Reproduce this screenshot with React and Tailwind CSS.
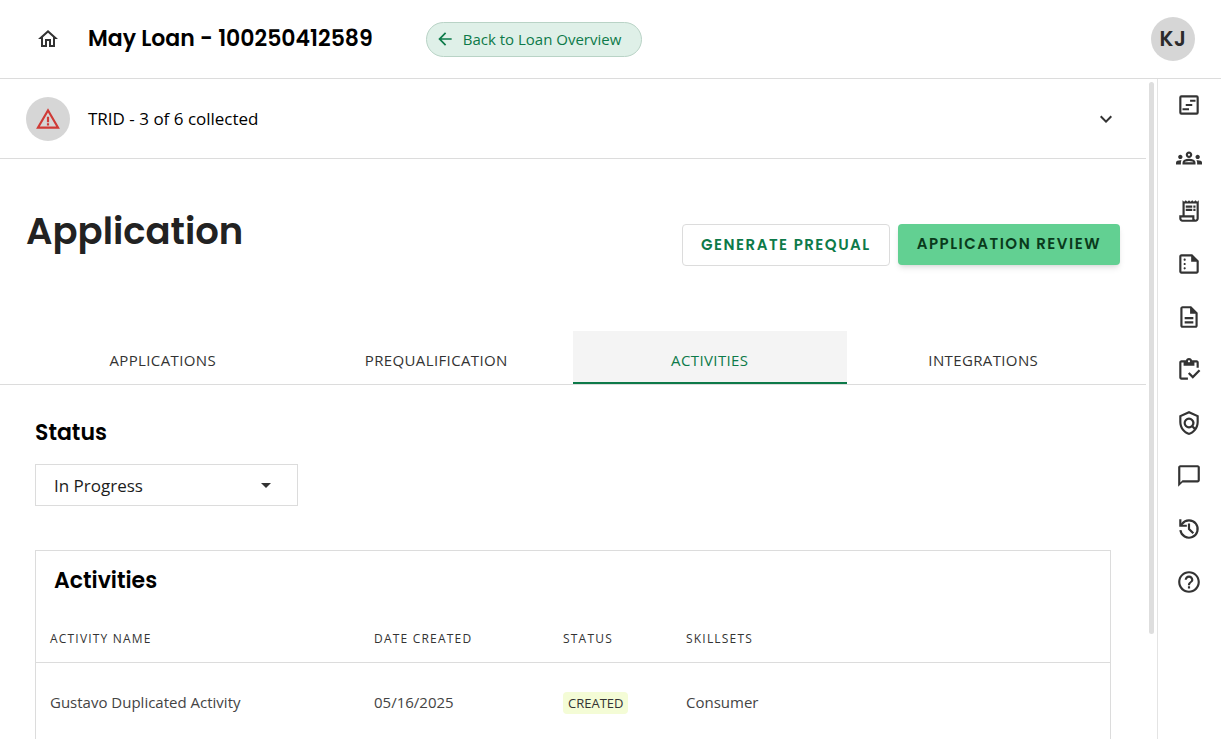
import React, { useState } from "react";
import {
  MdArrowBack,
  MdArrowDropDown,
  MdChatBubbleOutline,
  MdExpandMore,
  MdHelpOutline,
  MdOutlineDescription,
  MdOutlineGroups,
  MdOutlineHome,
  MdOutlineInventory,
  MdOutlinePolicy,
  MdOutlineReceiptLong,
  MdOutlineSummarize,
  MdWarningAmber,
} from "react-icons/md";

const TimelineIcon = (props) => (
  <svg viewBox="0 0 24 24" fill="none" stroke="currentColor" {...props}>
    <rect x="4" y="4" width="16" height="16" rx="1" strokeWidth="2" />
    <path d="M13 8h5M9 12h6M6 16h6" strokeWidth="1.8" />
  </svg>
);

const HistoryIcon = (props) => (
  <svg viewBox="0 0 24 24" fill="none" stroke="currentColor" strokeWidth="2" {...props}>
    <path d="M4.06 13A8 8 0 1 0 5.6 7.2L4.4 8.8" />
    <path d="M4 3v6h6" />
    <path d="M12 7v5l4 4" />
  </svg>
);

const sideLinks = [
  { label: "Timeline", Icon: TimelineIcon },
  { label: "Contacts", Icon: MdOutlineGroups },
  { label: "Fees", Icon: MdOutlineReceiptLong },
  { label: "Summary", Icon: MdOutlineSummarize },
  { label: "Documents", Icon: MdOutlineDescription },
  { label: "Conditions", Icon: MdOutlineInventory },
  { label: "Compliance", Icon: MdOutlinePolicy },
  { label: "Messages", Icon: MdChatBubbleOutline },
  { label: "History", Icon: HistoryIcon },
  { label: "Help", Icon: MdHelpOutline },
];

const tabs = ["Applications", "Prequalification", "Activities", "Integrations"];

const activities = [
  { name: "Gustavo Duplicated Activity", date: "05/16/2025", status: "Created", skillsets: "Consumer" },
];

const heading = "font-['Poppins','Inter',sans-serif] font-semibold";

const Header = () => (
  <header className="flex h-[79px] shrink-0 items-center border-b border-[#dcdcdc] pl-9 pr-[26px]">
    <a href="#home" aria-label="Home" className="text-[#333]">
      <MdOutlineHome className="size-6" />
    </a>
    <h1 className={`${heading} ml-7 text-[22px] leading-8 text-black`}>May Loan - 100250412589</h1>
    <a
      href="#overview"
      className="ml-[53px] flex h-[35px] items-center gap-2 rounded-full border border-[#b9d3c6] bg-[#dff0e8] pl-2 pr-5 text-[15px] text-[#0d7a49]"
    >
      <MdArrowBack className="size-5" />
      Back to Loan Overview
    </a>
    <button
      type="button"
      className={`${heading} ml-auto size-11 rounded-full bg-[#d6d6d6] text-[21px] tracking-wide text-[#2b2b2b]`}
    >
      KJ
    </button>
  </header>
);

const StatusSelect = () => {
  const [status, setStatus] = useState("In Progress");

  return (
    <div className="relative mt-[15px] w-[263px]">
      <select
        id="status"
        value={status}
        onChange={(e) => setStatus(e.target.value)}
        className="h-[42px] w-full appearance-none border border-[#dcdcdc] bg-white pl-[18px] pr-12 pt-0.5 text-[17px] text-[#1c1c1c]"
      >
        <option>In Progress</option>
        <option>Completed</option>
      </select>
      <MdArrowDropDown className="pointer-events-none absolute right-5 top-[9px] size-6 text-[#333]" />
    </div>
  );
};

const ActivitiesTable = () => (
  <section className="mt-11 border border-[#dcdcdc]">
    <h2 className={`${heading} px-[18px] pt-[14px] text-[22px] leading-8 text-black`}>Activities</h2>
    <table className="mt-[18px] w-full table-fixed text-left">
      <thead>
        <tr className="h-[47px] border-b border-[#dcdcdc] text-xs uppercase tracking-widest text-[#333]">
          <th className="w-[324px] px-[14px] pt-0.5 font-medium">Activity Name</th>
          <th className="w-[189px] px-[14px] pt-0.5 font-medium">Date Created</th>
          <th className="w-[123px] px-[14px] pt-0.5 font-medium">Status</th>
          <th className="px-[14px] pt-0.5 font-medium">Skillsets</th>
        </tr>
      </thead>
      <tbody>
        {activities.map((activity) => (
          <tr key={activity.name} className="h-20 border-b border-[#dcdcdc] text-[15px] text-[#444]">
            <td className="px-[14px]">{activity.name}</td>
            <td className="px-[14px]">{activity.date}</td>
            <td className="px-[14px]">
              <span className="inline-block rounded bg-[#f4fcd6] px-[5px] text-[13px] uppercase leading-[22px] text-[#333]">
                {activity.status}
              </span>
            </td>
            <td className="px-[14px]">{activity.skillsets}</td>
          </tr>
        ))}
      </tbody>
    </table>
  </section>
);

const App = () => {
  const [activeTab, setActiveTab] = useState("Activities");

  return (
    <div className="flex h-screen flex-col bg-white font-['Segoe_UI','Open_Sans',sans-serif]">
      <Header />
      <div className="flex min-h-0 flex-1">
        <main className="min-w-0 flex-1 overflow-y-auto pb-10 [scrollbar-width:none]">
          <div className="flex h-20 items-center border-b border-[#dcdcdc] pl-[26px] pr-7">
            <span className="flex size-11 items-center justify-center rounded-full bg-[#d6d6d6]">
              <MdWarningAmber className="size-[26px] text-[#cf3a36]" />
            </span>
            <p className="ml-[18px] text-[17px] text-black">TRID - 3 of 6 collected</p>
            <button type="button" aria-label="Expand TRID" className="ml-auto text-[#333]">
              <MdExpandMore className="size-6" />
            </button>
          </div>

          <div className="flex items-start justify-between px-[26px] pt-12">
            <h1 className={`${heading} text-[37px] leading-12 text-[#222]`}>Application</h1>
            <div className="mt-[17px] flex items-start gap-2">
              <button
                type="button"
                className={`${heading} h-[42px] rounded border border-[#dcdcdc] px-[18px] text-[15px] uppercase tracking-widest text-[#0d7a49]`}
              >
                Generate Prequal
              </button>
              <button
                type="button"
                className={`${heading} h-[41px] rounded bg-[#62d092] px-[19px] text-[15px] uppercase tracking-widest text-[#0a3a1c] shadow-md`}
              >
                Application Review
              </button>
            </div>
          </div>

          <div role="tablist" className="mt-[65px] grid grid-cols-4 border-b border-[#dcdcdc] px-[26px]">
            {tabs.map((tab) => (
              <button
                key={tab}
                type="button"
                role="tab"
                aria-selected={tab === activeTab}
                onClick={() => setActiveTab(tab)}
                className={
                  tab === activeTab
                    ? "h-[53px] border-b-2 border-[#0d7a49] bg-[#f4f4f4] pt-2 text-[15px] font-medium uppercase tracking-wide text-[#0d7a49]"
                    : "h-[53px] border-b-2 border-transparent pt-2 text-[15px] font-medium uppercase tracking-wide text-[#333]"
                }
              >
                {tab}
              </button>
            ))}
          </div>

          <div className="px-[35px] pt-8">
            <label htmlFor="status" className={`${heading} block text-[22px] leading-8 text-black`}>
              Status
            </label>
            <StatusSelect />
            <ActivitiesTable />
          </div>
        </main>

        <div className="w-[11px] shrink-0 px-[3px] pt-[3px]">
          <div className="h-[84%] rounded-full bg-[#dedede]" />
        </div>

        <nav className="flex w-16 shrink-0 flex-col items-center gap-[27px] border-l border-[#e4e4e4] pr-0.5 pt-[13px]">
          {sideLinks.map(({ label, Icon }) => (
            <a key={label} href={`#${label.toLowerCase()}`} aria-label={label} className="text-[#333]">
              <Icon className="size-[26px]" />
            </a>
          ))}
        </nav>
      </div>
    </div>
  );
};

export default App;
